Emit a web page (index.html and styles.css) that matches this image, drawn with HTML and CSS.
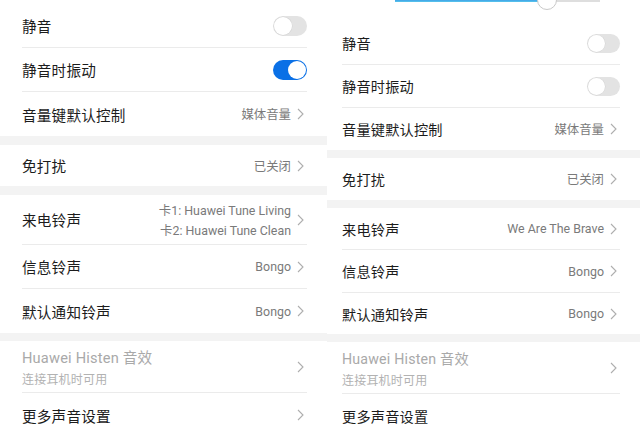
FILE: index.html
```html
<!DOCTYPE html>
<html lang="zh-CN">
<head>
    <meta charset="UTF-8">
    <meta name="viewport" content="width=device-width, initial-scale=1.0">
    <title>声音</title>
    <link rel="stylesheet" href="styles.css">
</head>
<body>
    <div class="screens">
        <section class="panel panel-left">
            <div class="group top-pad">
                <div class="row h44"><span class="label">静音</span><span class="switch"></span></div>
                <div class="row h44"><span class="label">静音时振动</span><span class="switch on"></span></div>
                <div class="row h44 last"><span class="label">音量键默认控制</span><span class="value">媒体音量</span><svg class="chev" viewBox="0 0 7 12"><polyline points="1,1 6,6 1,11"/></svg></div>
            </div>
            <div class="band"></div>
            <div class="group">
                <div class="row h41 last"><span class="label">免打扰</span><span class="value">已关闭</span><svg class="chev" viewBox="0 0 7 12"><polyline points="1,1 6,6 1,11"/></svg></div>
            </div>
            <div class="band"></div>
            <div class="group">
                <div class="row h50">
                    <span class="label">来电铃声</span>
                    <span class="value two">
                        <span>卡1: Huawei Tune Living</span>
                        <span>卡2: Huawei Tune Clean</span>
                    </span>
                    <svg class="chev" viewBox="0 0 7 12"><polyline points="1,1 6,6 1,11"/></svg>
                </div>
                <div class="row h44"><span class="label">信息铃声</span><span class="value">Bongo</span><svg class="chev" viewBox="0 0 7 12"><polyline points="1,1 6,6 1,11"/></svg></div>
                <div class="row h44 last"><span class="label">默认通知铃声</span><span class="value">Bongo</span><svg class="chev" viewBox="0 0 7 12"><polyline points="1,1 6,6 1,11"/></svg></div>
            </div>
            <div class="band thin"></div>
            <div class="group">
                <div class="row h52">
                    <span class="label muted">
                        <span>Huawei Histen 音效</span>
                        <span class="sub">连接耳机时可用</span>
                    </span>
                    <svg class="chev" viewBox="0 0 7 12"><polyline points="1,1 6,6 1,11"/></svg>
                </div>
                <div class="row h44 last"><span class="label">更多声音设置</span><svg class="chev" viewBox="0 0 7 12"><polyline points="1,1 6,6 1,11"/></svg></div>
            </div>
        </section>

        <section class="panel panel-right">
            <div class="slider">
                <div class="track">
                    <div class="fill"></div>
                    <div class="rest"></div>
                    <div class="thumb"></div>
                </div>
            </div>
            <div class="group">
                <div class="row h43"><span class="label">静音</span><span class="switch"></span></div>
                <div class="row h43"><span class="label">静音时振动</span><span class="switch"></span></div>
                <div class="row h42 last"><span class="label">音量键默认控制</span><span class="value">媒体音量</span><svg class="chev" viewBox="0 0 7 12"><polyline points="1,1 6,6 1,11"/></svg></div>
            </div>
            <div class="band thin"></div>
            <div class="group">
                <div class="row h42 last"><span class="label">免打扰</span><span class="value">已关闭</span><svg class="chev" viewBox="0 0 7 12"><polyline points="1,1 6,6 1,11"/></svg></div>
            </div>
            <div class="band thin"></div>
            <div class="group">
                <div class="row h42"><span class="label">来电铃声</span><span class="value">We Are The Brave</span><svg class="chev" viewBox="0 0 7 12"><polyline points="1,1 6,6 1,11"/></svg></div>
                <div class="row h43"><span class="label">信息铃声</span><span class="value">Bongo</span><svg class="chev" viewBox="0 0 7 12"><polyline points="1,1 6,6 1,11"/></svg></div>
                <div class="row h41 last"><span class="label">默认通知铃声</span><span class="value">Bongo</span><svg class="chev" viewBox="0 0 7 12"><polyline points="1,1 6,6 1,11"/></svg></div>
            </div>
            <div class="band thin"></div>
            <div class="group">
                <div class="row h52">
                    <span class="label muted">
                        <span>Huawei Histen 音效</span>
                        <span class="sub">连接耳机时可用</span>
                    </span>
                    <svg class="chev" viewBox="0 0 7 12"><polyline points="1,1 6,6 1,11"/></svg>
                </div>
                <div class="row h43 last"><span class="label">更多声音设置</span></div>
            </div>
        </section>
    </div>
</body>
</html>
```

FILE: styles.css
```css
html, body {
    margin: 0;
    padding: 0;
    background-color: #fff;
}
body {
    width: 640px;
    height: 437px;
    overflow: hidden;
    font-family: Roboto, "Noto Sans CJK SC", sans-serif;
    color: #1c1c1c;
}
.screens {
    display: flex;
    height: 437px;
}
.panel {
    display: flex;
    flex-direction: column;
    overflow: hidden;
    background-color: #fff;
}
.panel-left {
    width: 327px;
    --pad-left: 22px;
    --pad-right: 20px;
    --label-size: 14.6px;
    --switch-w: 34px;
    --switch-h: 20px;
}
.panel-right {
    width: 313px;
    --pad-left: 15px;
    --pad-right: 20px;
    --label-size: 14.2px;
    --switch-w: 33px;
    --switch-h: 19px;
}
.top-pad {
    padding-top: 4px;
}
.group {
    background-color: #fff;
}
.band {
    height: 9px;
    background-color: #f3f3f3;
}
.band.thin {
    height: 8px;
}
.row {
    display: flex;
    align-items: center;
    margin: 0 var(--pad-right) 0 var(--pad-left);
    border-bottom: 1px solid #ebebeb;
    box-sizing: border-box;
}
.row.last {
    border-bottom: none;
}
.h41 { height: 41px; }
.h42 { height: 42px; }
.h43 { height: 43px; }
.h44 { height: 44px; }
.h50 { height: 50px; }
.h52 { height: 52px; }
.label {
    flex: 1;
    font-size: var(--label-size);
    letter-spacing: 0.2px;
}
.label.muted {
    display: flex;
    flex-direction: column;
    color: #a9a9a9;
    gap: 3px;
}
.label .sub {
    font-size: 12px;
    color: #b2b2b2;
}
.value {
    font-size: 12.4px;
    color: #7a7a7a;
    margin-right: 6px;
}
.value.two {
    display: flex;
    flex-direction: column;
    align-items: flex-end;
    gap: 2px;
    font-size: 12.4px;
}
.chev {
    width: 7px;
    height: 12px;
    margin-right: 3px;
    fill: none;
    stroke: #aeaeae;
    stroke-width: 1.1;
}
.switch {
    position: relative;
    width: var(--switch-w);
    height: var(--switch-h);
    border-radius: 10px;
    background-color: #e3e3e3;
    box-sizing: border-box;
}
.switch::after {
    content: "";
    position: absolute;
    top: 1px;
    left: 1px;
    width: calc(var(--switch-h) - 2px);
    height: calc(var(--switch-h) - 2px);
    border-radius: 50%;
    background-color: #fff;
    box-shadow: 0 0 0 0.5px #d4d4d4;
}
.switch.on {
    background-color: #0a70e6;
}
.switch.on::after {
    left: auto;
    right: 1px;
    box-shadow: none;
}
.slider {
    height: 22px;
    display: flex;
    padding-left: 68px;
}
.track {
    position: relative;
    display: flex;
    width: 205px;
    height: 3px;
    margin-top: -1px;
}
.fill {
    width: 143px;
    background: linear-gradient(#2f8de4, #5bc8ec);
}
.rest {
    flex: 1;
    background-color: #dedede;
}
.thumb {
    position: absolute;
    left: 142px;
    top: -9px;
    width: 20px;
    height: 20px;
    border-radius: 50%;
    background-color: #fff;
    border: 1px solid #c9c9c9;
    box-sizing: border-box;
}
```
